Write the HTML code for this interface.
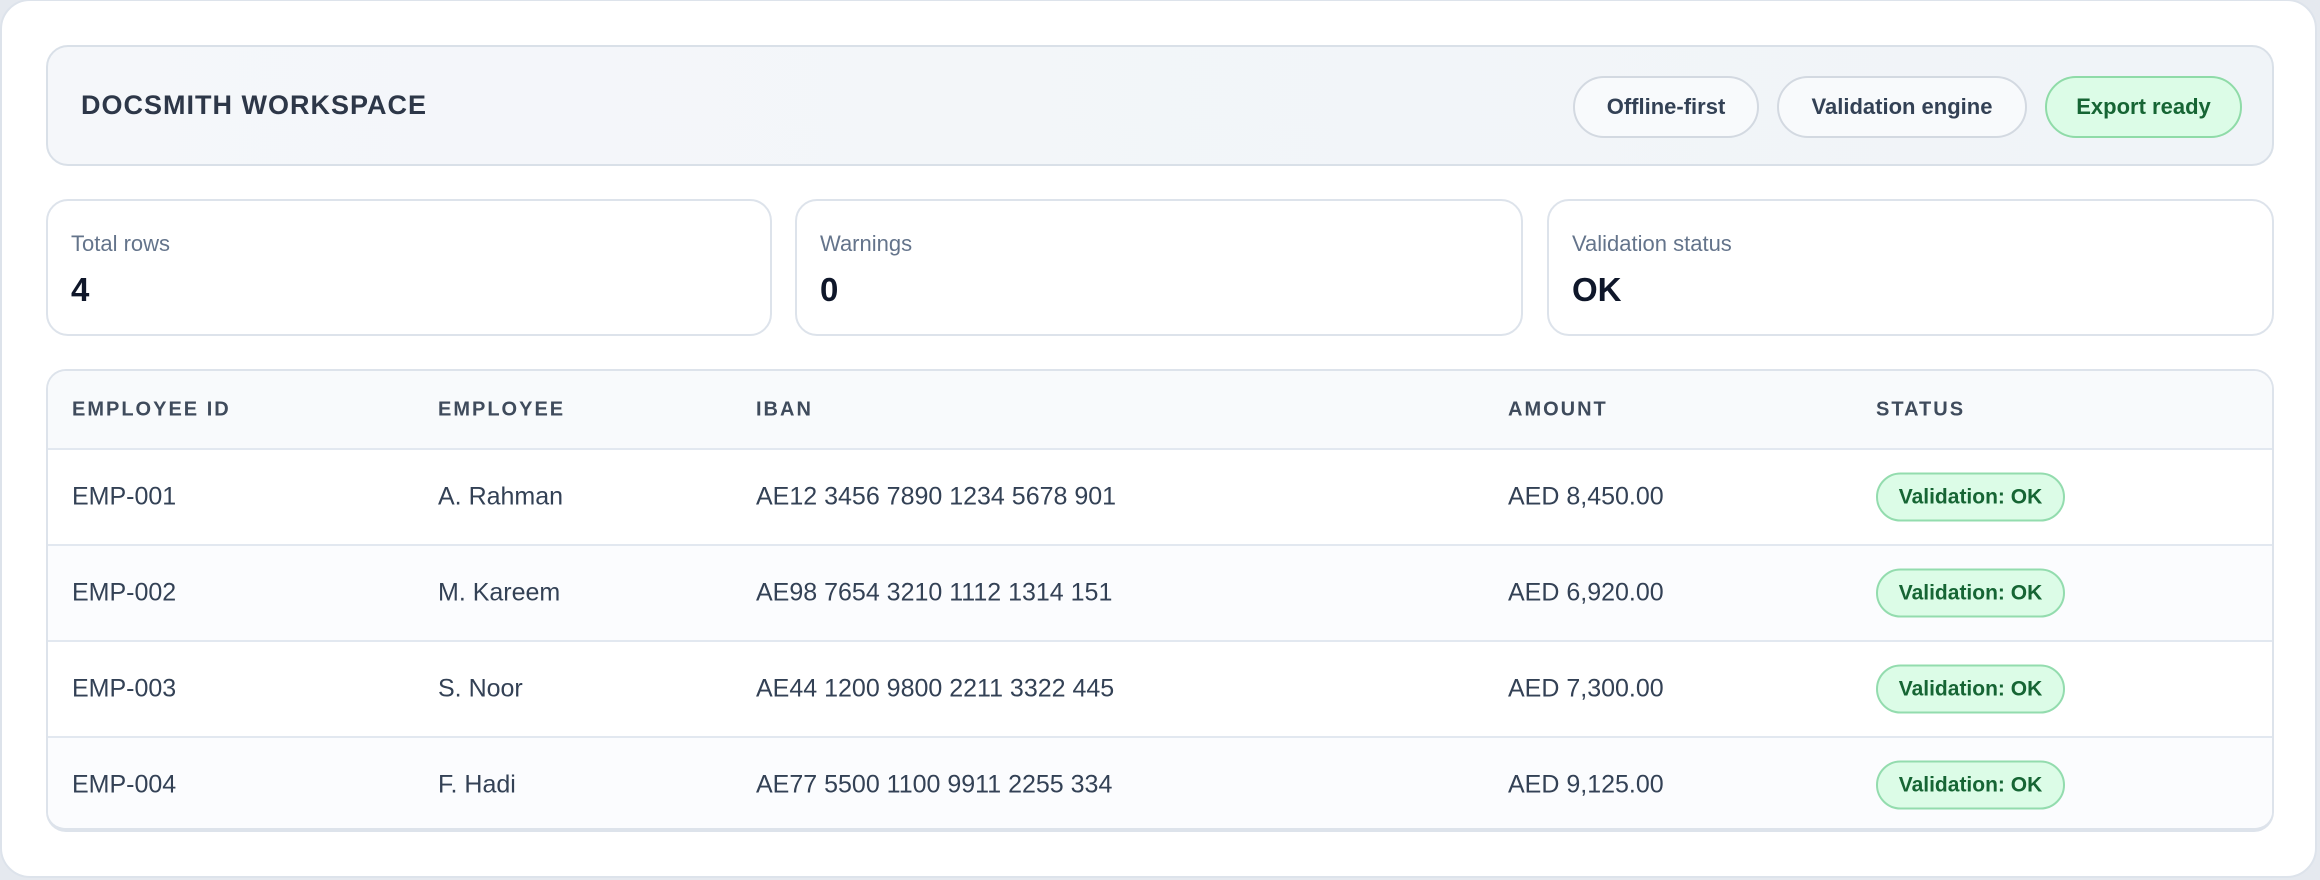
<!DOCTYPE html>
<html><head><meta charset="utf-8"><style>
*{box-sizing:border-box;margin:0;padding:0}
html,body{width:2320px;height:880px;background:#e5e9ef;font-family:"Liberation Sans",sans-serif;overflow:hidden}
.outer{position:absolute;left:0;top:-1px;width:2317px;height:879px;background:#fff;border:2px solid #dde3eb;border-radius:30px}
.hdr{position:absolute;left:44px;top:44px;width:2228px;height:121px;background:linear-gradient(90deg,#f5f7fa,#f0f4f8);border:2px solid #d9e0e8;border-radius:22px}
.title{position:absolute;left:33px;top:43px;font-size:27px;font-weight:700;color:#2d3748;letter-spacing:1px}
.pill{position:absolute;top:29px;height:62px;border:2px solid #d3d9e1;border-radius:31px;background:#f8fafc;font-size:22px;font-weight:700;color:#334155;display:flex;align-items:center;justify-content:center}
.pill.g{background:#dcfce7;border-color:#8fdba8;color:#166534}
.card{position:absolute;top:198px;height:137px;border:2px solid #dde3eb;border-radius:22px;background:#fff}
.lab{position:absolute;left:23px;top:30px;font-size:22px;color:#64748b}
.val{position:absolute;left:23px;top:70px;font-size:33px;font-weight:700;color:#0f172a}
.tbl{position:absolute;left:44px;top:368px;width:2228px;height:463px;border:2px solid #dde3eb;border-bottom:4px solid #dde3eb;border-radius:20px;overflow:hidden;background:#fff}
.row{position:absolute;left:0;width:100%;border-top:2px solid #e2e8f0}
.th{top:0;height:77px;background:#f8fafc;border-top:none}
.row span{position:absolute;top:50%;transform:translateY(-50%);font-size:25px;color:#334155;white-space:nowrap}
.th span{font-size:20px;font-weight:700;letter-spacing:2px;color:#3f4b5c}
.alt{background:#fbfcfe}
.badge{position:absolute;left:1828px;top:50%;transform:translateY(-50%);width:189px;height:49px;border:2px solid #93dcae;background:#dcfce7;border-radius:25px;font-size:21px;font-weight:700;color:#166534;display:flex;align-items:center;justify-content:center}
</style></head><body>
<div class="outer">
<div class="hdr">
<div class="title">DOCSMITH WORKSPACE</div>
<div class="pill" style="left:1525px;width:186px">Offline-first</div>
<div class="pill" style="left:1729px;width:250px">Validation engine</div>
<div class="pill g" style="left:1997px;width:197px">Export ready</div>
</div>
<div class="card" style="left:44px;width:726px"><div class="lab">Total rows</div><div class="val">4</div></div>
<div class="card" style="left:793px;width:728px"><div class="lab">Warnings</div><div class="val">0</div></div>
<div class="card" style="left:1545px;width:727px"><div class="lab">Validation status</div><div class="val">OK</div></div>
<div class="tbl">
<div class="row th"><span style="left:24px">EMPLOYEE ID</span><span style="left:390px">EMPLOYEE</span><span style="left:708px">IBAN</span><span style="left:1460px">AMOUNT</span><span style="left:1828px">STATUS</span></div>
<div class="row" style="top:77px;height:96px"><span style="left:24px">EMP-001</span><span style="left:390px">A. Rahman</span><span style="left:708px">AE12 3456 7890 1234 5678 901</span><span style="left:1460px">AED 8,450.00</span><div class="badge">Validation: OK</div></div>
<div class="row alt" style="top:173px;height:96px"><span style="left:24px">EMP-002</span><span style="left:390px">M. Kareem</span><span style="left:708px">AE98 7654 3210 1112 1314 151</span><span style="left:1460px">AED 6,920.00</span><div class="badge">Validation: OK</div></div>
<div class="row" style="top:269px;height:96px"><span style="left:24px">EMP-003</span><span style="left:390px">S. Noor</span><span style="left:708px">AE44 1200 9800 2211 3322 445</span><span style="left:1460px">AED 7,300.00</span><div class="badge">Validation: OK</div></div>
<div class="row alt" style="top:365px;height:96px"><span style="left:24px">EMP-004</span><span style="left:390px">F. Hadi</span><span style="left:708px">AE77 5500 1100 9911 2255 334</span><span style="left:1460px">AED 9,125.00</span><div class="badge">Validation: OK</div></div>
</div>
</div>
</body></html>
